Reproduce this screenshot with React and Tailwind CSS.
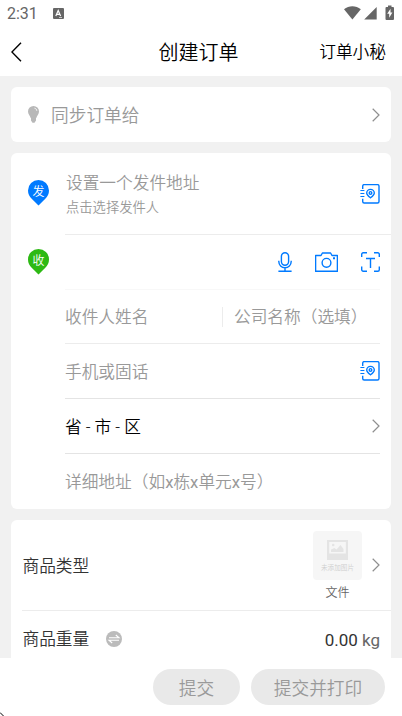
const fontStack = "font-[Roboto,'Noto_Sans_CJK_SC',sans-serif]";

function Chevron({ className = "" }) {
  return (
    <svg width="8" height="14" viewBox="0 0 8 14" fill="none" stroke="#8f8f8f" strokeWidth="1.2" className={className}>
      <path d="M.7.8 7 7 .7 13.2" />
    </svg>
  );
}

function AddressBook() {
  return (
    <svg width="20" height="20" viewBox="0 0 20 20" fill="none" stroke="#007aff" strokeWidth="1.4">
      <path d="M2.700 5V2A1.500 1.500 0 0 1 4.200.6h13.300A1.500 1.500 0 0 1 19 2v15.500a1.500 1.500 0 0 1-1.500 1.500H4.200a1.500 1.500 0 0 1-1.500-1.500v-2.700" />
      <path d="M.4 6.500h4M.4 9.500h4M.4 12.500h4" strokeWidth="1.200" />
      <path d="M10.500 13.800C8.100 12 6.700 10.800 6.700 9a3.800 3.600 0 0 1 7.600 0c0 1.800-1.400 3-3.800 4.800Z" />
      <circle cx="10.500" cy="8.900" r="1.300" />
    </svg>
  );
}

function Mic() {
  return (
    <svg width="14" height="20" viewBox="0 0 14 20" fill="none" stroke="#007aff" strokeWidth="1.4">
      <rect x="3.4" y=".8" width="7.200" height="12.400" rx="3.600" />
      <path d="M.8 8.800v.8a6.200 6.200 0 0 0 12.400 0v-.8M7 15.800v3M.4 19.300h13.200" />
    </svg>
  );
}

function Camera() {
  return (
    <svg width="23" height="20" viewBox="0 0 23 20" fill="none" stroke="#007aff" strokeWidth="1.4">
      <path d="M.6 3.500h5.400L7.400 1h8.200L17 3.500h5.400v15.800H.6Z" strokeLinejoin="round" />
      <circle cx="11.500" cy="10.800" r="4.400" />
      <path d="M18 6.200h2" strokeWidth="2" />
    </svg>
  );
}

function ScanText() {
  return (
    <svg width="19" height="20" viewBox="0 0 19 20" fill="none" stroke="#007aff" strokeWidth="1.4">
      <path d="M.7 5V2.300A1.500 1.500 0 0 1 2.200.8H6M13 .8h3.800a1.500 1.500 0 0 1 1.500 1.500V5M18.300 14.500v3.200a1.500 1.500 0 0 1-1.500 1.500H13M6 19.200H2.200a1.500 1.500 0 0 1-1.500-1.500v-3.200" />
      <path d="M5 6.500h9M9.500 6.500v9.500" />
    </svg>
  );
}

function Pin({ label, color }) {
  return (
    <div className="relative w-[21px] h-[26px]">
      <svg width="21" height="26" viewBox="0 0 21 26" fill={color} className="block">
        <path d="M10.500 0A10.500 10.500 0 0 1 21 10.500c0 3.400-1.400 5.900-3.700 8.200L10.500 25.500 3.700 18.700C1.400 16.400 0 13.900 0 10.500A10.500 10.500 0 0 1 10.500 0Z" />
      </svg>
      <span className="absolute inset-x-0 top-[2px] text-center text-white text-[12px] leading-[21px]">{label}</span>
    </div>
  );
}

function StatusBar() {
  return (
    <div className="h-7 shrink-0 flex items-center justify-between pl-[7px] pr-[7px]">
      <div className="flex items-center">
        <span className="w-[46px] text-base leading-7 font-normal text-[#666]">2:31</span>
        <svg width="11" height="11" viewBox="0 0 11 11" className="-mt-px">
          <rect width="11" height="11" rx="1" fill="#666" />
          <path d="m2.800 8 2.400-5.500L7.600 8M3.800 6.300h2.800" fill="none" stroke="#fff" strokeWidth="1.200" />
          <path d="M6 9.500h3" stroke="#ddd" strokeWidth=".8" />
        </svg>
      </div>
      <svg width="52" height="16" viewBox="0 0 52 16" fill="#666" className="-mt-[2px]">
        <path d="M1 4.200C5.800.3 13 .3 17.800 4.200L9.400 14.500Z" />
        <path d="M33.700 2v12.500H21.200Z" />
        <path d="M45 .5h3.500V2H50a1 1 0 0 1 1 1v11a1 1 0 0 1-1 1h-6.500a1 1 0 0 1-1-1V3a1 1 0 0 1 1-1H45Z" />
        <path d="m47.500 3.800-3.300 5h2v4l3.200-5.300h-1.900Z" fill="#fff" />
      </svg>
    </div>
  );
}

export default function App() {
  return (
    <div className={`relative w-[402px] h-[716px] overflow-hidden flex flex-col bg-white text-[16.700px] font-[350] leading-6 text-[#999] ${fontStack}`}>
      <StatusBar />

      <header className="h-12 shrink-0 grid grid-cols-3 items-center pl-[11px] pr-4 text-black">
        <svg width="11" height="20" viewBox="0 0 11 20" fill="none" stroke="#000" strokeWidth="1.400">
          <path d="M10 .7.900 10l9.100 9.300" />
        </svg>
        <h1 className="pt-[2px] text-xl leading-6 text-center whitespace-nowrap">创建订单</h1>
        <span className="pt-[2px] text-right">订单小秘</span>
      </header>

      <main className="flex-1 min-h-0 overflow-hidden bg-[#f1f1f1] px-[11px] pt-[11px] flex flex-col gap-[11px]">
        <section className="h-[55px] shrink-0 rounded-md bg-white flex items-center pl-[17px] pr-[11px]">
          <svg width="11" height="17" viewBox="0 0 11 17" fill="#b8b8b8">
            <path d="M5.500 0A5.500 5.500 0 0 1 11 5.500c0 2.600-1.900 3.900-2.700 6.500H2.700C1.900 9.400 0 8.100 0 5.500A5.500 5.500 0 0 1 5.500 0ZM3 12h5v2.500l-1.500 2.200h-2L3 14.500Z" />
            <path d="M6.500 2.200c1.500.3 2.200 1.300 2.300 2.600" fill="none" stroke="#fff" strokeWidth=".9" />
          </svg>
          <span className="ml-3 pt-[2px] flex-1 text-[17.700px]">同步订单给</span>
          <Chevron />
        </section>

        <section className="h-[356px] shrink-0 rounded-md bg-white pl-[17px]">
          <div className="flex h-[82px]">
            <div className="w-[37px] pt-[27px]"><Pin label="发" color="#007aff" /></div>
            <div className="flex-1 flex items-center justify-between border-b border-[#ececec] pr-[11px]">
              <div className="pl-px pt-[5px]">
                <p className="leading-6">设置一个发件地址</p>
                <p className="text-[13.300px] leading-6">点击选择发件人</p>
              </div>
              <AddressBook />
            </div>
          </div>

          <div className="flex pr-[11px]">
            <div className="w-[37px] pt-[14px]"><Pin label="收" color="#2db914" /></div>
            <div className="flex-1">
              <div className="h-[55px] flex items-center justify-end gap-[23px] border-b border-[#f8f8f8]">
                <Mic />
                <Camera />
                <ScanText />
              </div>
              <div className="h-[54px] flex items-center border-b border-[#ececec]">
                <span className="w-[157px] pt-[3px]">收件人姓名</span>
                <span className="h-5 w-px bg-[#ececec]" />
                <span className="ml-[11px] pt-[3px]">公司名称（选填）</span>
              </div>
              <div className="h-[55px] flex items-center justify-between border-b border-[#e4e4e4]">
                <span className="pt-1">手机或固话</span>
                <AddressBook />
              </div>
              <div className="h-[55px] flex items-center justify-between border-b border-[#e4e4e4]">
                <span className="pt-1 text-black">省 - 市 - 区</span>
                <Chevron />
              </div>
              <p className="pt-[17px]">
                详细地址（如<span className="font-normal">x</span>栋<span className="font-normal">x</span>单元<span className="font-normal">x</span>号）
              </p>
            </div>
          </div>
        </section>

        <section className="shrink-0 rounded-t-md bg-white pl-[11px] text-[#333]">
          <div className="h-[91px] flex items-center justify-between border-b border-[#ececec] pr-[11px]">
            <span className="pt-[3px] pl-[.5px]">商品类型</span>
            <div className="flex items-center">
              <div className="w-[49px] mr-[10px] flex flex-col items-center">
                <div className="w-[49px] h-[49px] mt-[5px] rounded bg-[#f6f6f6] flex flex-col items-center pt-[9px]">
                  <svg width="21" height="20" viewBox="0 0 21 20">
                    <path d="M0 0h21v20H0ZM2.200 2v11.500h16.600V2Z" fill="#e4e4e4" fillRule="evenodd" />
                    <path d="M4 12V9.500L7.500 8l2 1.500L13.500 5l3 4v3Z" fill="#e4e4e4" />
                    <circle cx="6.200" cy="5" r="1.300" fill="#e4e4e4" />
                  </svg>
                  <span className="text-[6.600px] leading-[16px] text-[#cfcfcf] whitespace-nowrap">未添加图片</span>
                </div>
                <span className="pt-px text-[12px] leading-6 text-[#666]">文件</span>
              </div>
              <Chevron />
            </div>
          </div>
          <div className="h-[56px] flex items-center pr-[11px]">
            <span className="pt-[2px] pl-[.5px]">商品重量</span>
            <svg width="16" height="16" viewBox="0 0 16 16" className="ml-[17px]">
              <circle cx="8" cy="8" r="8" fill="#bbb" />
              <path d="M3 6.800h10L9.800 4M13 9.200H3L6.200 12" fill="none" stroke="#fff" strokeWidth="1.100" />
            </svg>
            <span className="ml-auto pt-px text-[17px] font-normal">0.00 <span className="text-[#666]">kg</span></span>
          </div>
        </section>
      </main>

      <footer className="h-[58px] shrink-0 flex items-center justify-end gap-[11px] pr-[17px] text-[17.700px]">
        <button className="w-[87px] h-9 pt-[3px] rounded-full bg-[#e9e9e9]">提交</button>
        <button className="w-[134px] h-9 pt-[3px] rounded-full bg-[#e9e9e9]">提交并打印</button>
      </footer>

      <svg width="4" height="4" viewBox="0 0 4 4" className="absolute left-0 bottom-0" stroke="#000">
        <path d="M0 .5 3.500 4" />
      </svg>
    </div>
  );
}
